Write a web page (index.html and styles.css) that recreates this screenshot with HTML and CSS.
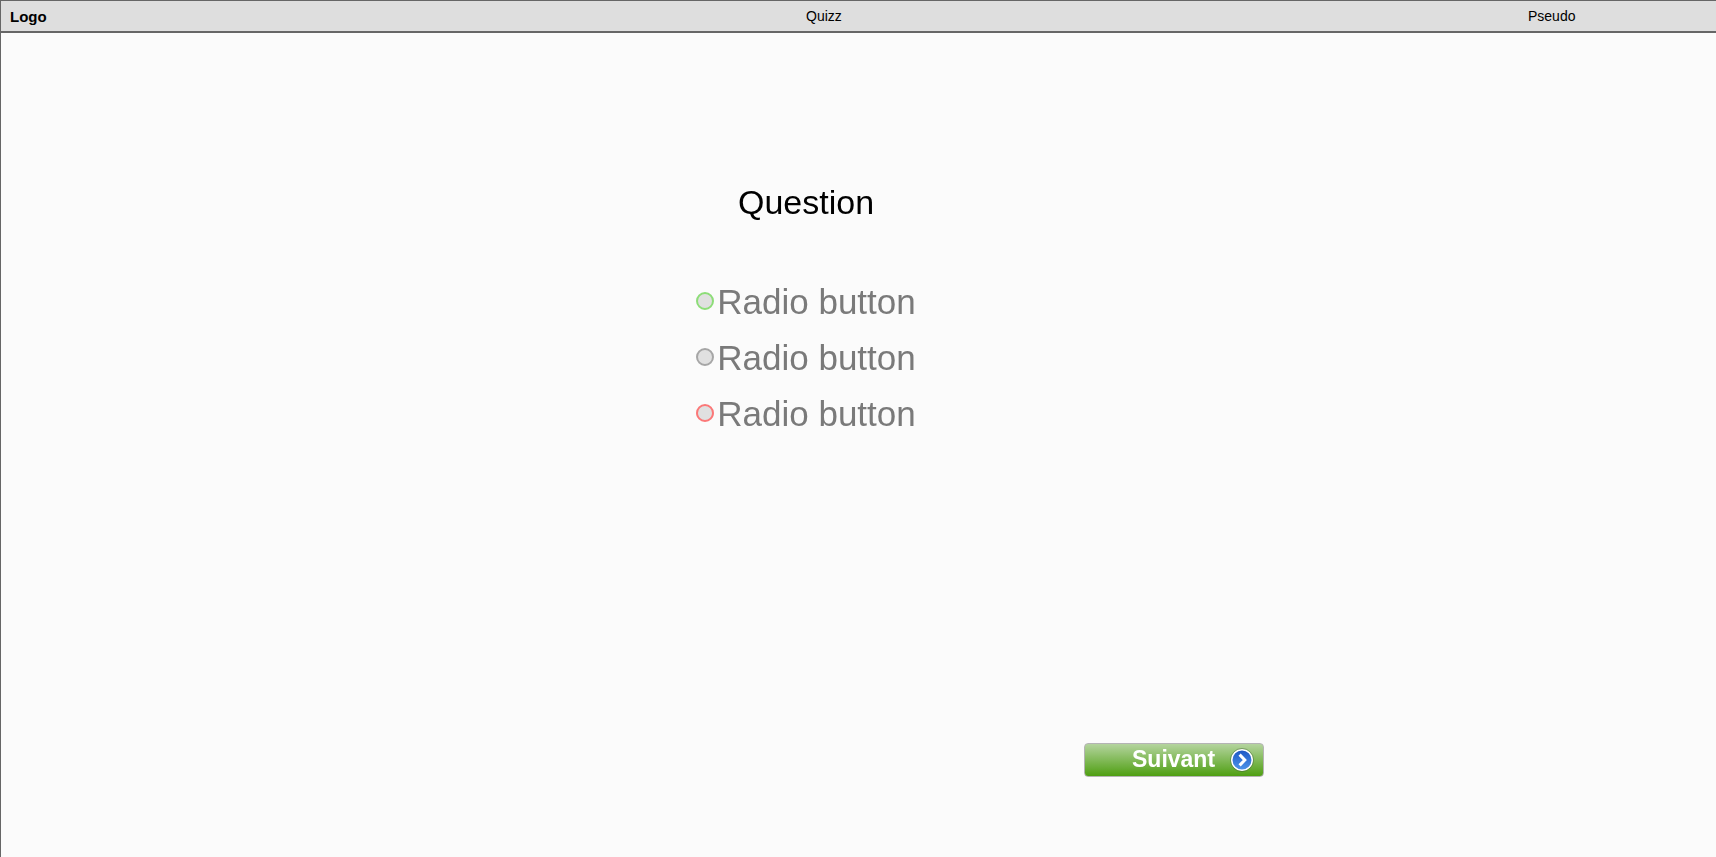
FILE: index.html
```html
<!DOCTYPE html>
<html lang="fr">
<head>
  <meta charset="UTF-8">
  <title>Quizz</title>
  <link rel="stylesheet" href="styles.css">
</head>
<body>
  <header class="topbar">
    <span class="logo">Logo</span>
    <span class="title">Quizz</span>
    <span class="pseudo">Pseudo</span>
  </header>

  <main class="quiz">
    <h1 class="question">Question</h1>

    <div class="answers">
      <label class="answer"><span class="radio radio-green"></span>Radio button</label>
      <label class="answer"><span class="radio radio-grey"></span>Radio button</label>
      <label class="answer"><span class="radio radio-red"></span>Radio button</label>
    </div>

    <div class="actions">
      <button class="next" type="button">
        <span class="next-label">Suivant</span>
        <svg class="next-icon" width="24" height="24" viewBox="0 0 24 24">
          <defs>
            <linearGradient id="nextBlue" x1="0" y1="0" x2="0" y2="1">
              <stop offset="0" stop-color="#1c55c4"/>
              <stop offset="1" stop-color="#4f96ea"/>
            </linearGradient>
          </defs>
          <circle cx="12" cy="12" r="10.3" fill="url(#nextBlue)" stroke="#ffffff" stroke-width="1.6"/>
          <circle cx="12" cy="12" r="11.5" fill="none" stroke="#3c5a30" stroke-opacity="0.55" stroke-width="0.8"/>
          <path d="M9.6 6.6 L14.8 12 L9.6 17.4" fill="none" stroke="#ffffff" stroke-width="3"/>
        </svg>
      </button>
    </div>
  </main>
</body>
</html>
```

FILE: styles.css
```css
body {
  font-family: "Liberation Sans", Arial, sans-serif;
  background: #fbfbfb;
  margin: 0;
  padding: 0;
  height: 857px;
  border-left: 1px solid #666;
  box-sizing: border-box;
  overflow: hidden;
}

.topbar {
  display: grid;
  grid-template-columns: 796px 722px 1fr;
  align-items: center;
  height: 33px;
  box-sizing: border-box;
  padding: 0 0 0 9px;
  background: #dedede;
  border-top: 1px solid #666;
  border-bottom: 2px solid #666;
  font-size: 14px;
  color: #000;
}

.logo {
  font-size: 15px;
  font-weight: bold;
}

.quiz {
  display: flex;
  flex-direction: column;
  width: 1610px;
  will-change: opacity;
}

.question {
  margin: 148px 0 0;
  text-align: center;
  font-size: 34px;
  font-weight: normal;
  line-height: 42px;
  color: #000;
}

.answers {
  display: flex;
  flex-direction: column;
  align-items: center;
  gap: 14px;
  margin-top: 58px;
}

.answer {
  display: flex;
  align-items: center;
  gap: 3px;
  height: 42px;
  font-size: 35px;
  color: #7a7a7a;
}

.radio {
  width: 18px;
  height: 18px;
  margin-top: -2px;
  box-sizing: border-box;
  border-radius: 50%;
  background: #e0e0e0;
  border: 2px solid #a6a6a6;
}

.radio-green {
  border-color: #8ddd78;
}

.radio-red {
  border-color: #fb7878;
}

.actions {
  display: flex;
  justify-content: flex-end;
  margin-top: 308px;
  padding-right: 347px;
}

.next {
  display: flex;
  align-items: center;
  width: 180px;
  height: 34px;
  box-sizing: border-box;
  padding: 0 9px 0 47px;
  border: 1px solid #b4b4b4;
  border-radius: 4px;
  background: linear-gradient(#b4d49e, #4f9f12);
  font-family: inherit;
  font-size: 23px;
  font-weight: bold;
  color: #fff;
}

.next-label {
  flex: 1;
  text-align: left;
  margin-top: -2px;
}
```
